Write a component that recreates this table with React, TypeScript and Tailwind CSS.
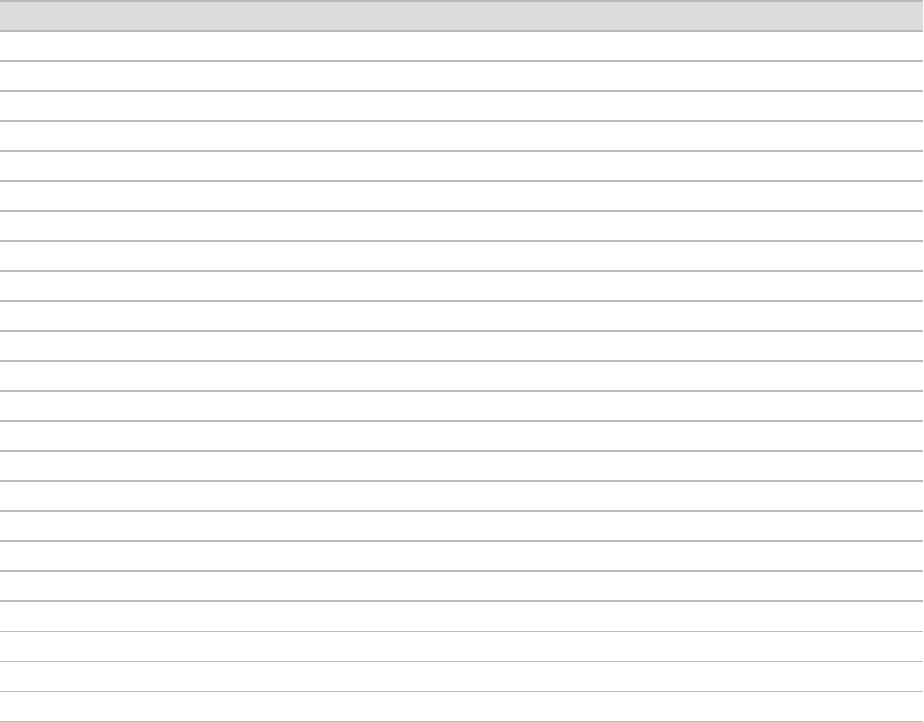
const thickRows = Array.from({ length: 19 }, (_, i) => i);
const thinRows = Array.from({ length: 4 }, (_, i) => i);

export default function App() {
  return (
    <div className="w-[923px] h-[722px] overflow-hidden bg-white font-['Liberation_Sans',sans-serif]">
      <div className="border-t-2 border-b-2 border-[#bbbbbb] bg-[#dcdcdc] h-[32px]" />
      {thickRows.map((r) => (
        <div key={`a${r}`} className="h-[30px] border-b-2 border-[#bbbbbb]" />
      ))}
      {thinRows.map((r) => (
        <div key={`b${r}`} className={`${r === 0 ? "h-[30px]" : "h-[30px]"} border-b border-[#bbbbbb]`} />
      ))}
    </div>
  );
}
